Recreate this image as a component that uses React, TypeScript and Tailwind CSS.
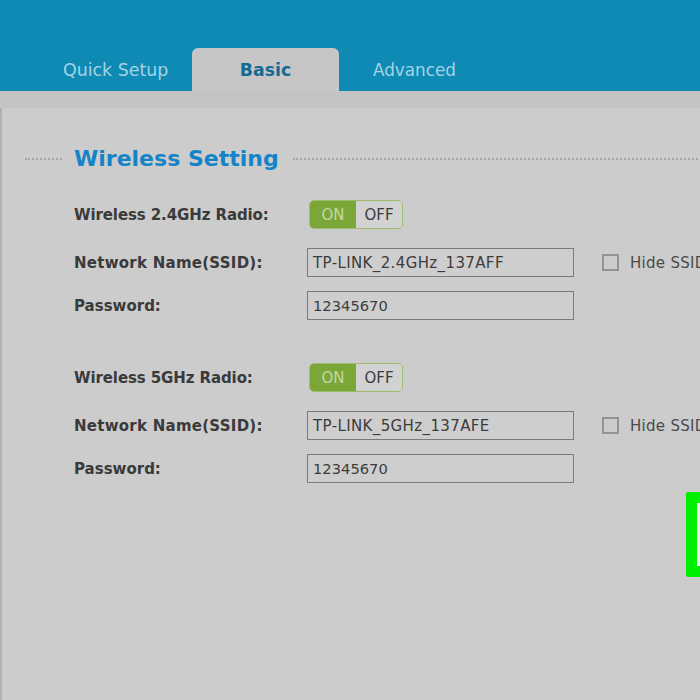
const font = "font-['DejaVu_Sans',_Verdana,_sans-serif]";

function Toggle() {
  return (
    <div className="ml-[2px] flex h-[29px] w-[94px] overflow-hidden rounded-[5px] border border-[#9dbb6e] text-[15px] leading-[29px]">
      <div className="w-[46px] bg-[#7ba638] text-center text-[#c3d8a1]">ON</div>
      <div className="flex-1 bg-[#d2d2d2] text-center text-[#3c3c3c]">OFF</div>
    </div>
  );
}

function Field({ value, wide }: { value: string; wide?: boolean }) {
  return (
    <div
      className={
        wide
          ? "h-[29px] w-[267px] shrink-0 border border-[#7b7b7b] bg-[#cecece] pl-[5px] text-[15px] leading-[29px] tracking-[0.38px] text-[#3c3c3c]"
          : "h-[29px] w-[267px] shrink-0 border border-[#7b7b7b] bg-[#cecece] pl-[5px] text-[14.7px] leading-[27px] text-[#3c3c3c]"
      }
    >
      {value}
    </div>
  );
}

function Label({ children, wide, tight }: { children: string; wide?: boolean; tight?: boolean }) {
  return (
    <div
      className={
        wide
          ? "mt-[2px] w-[233px] shrink-0 text-[15px] font-bold tracking-[0.26px] text-[#3a3a3a]"
          : tight
            ? "mt-[2px] w-[233px] shrink-0 text-[15px] font-bold tracking-[-0.1px] text-[#3a3a3a]"
            : "mt-[2px] w-[233px] shrink-0 text-[15px] font-bold text-[#3a3a3a]"
      }
    >
      {children}
    </div>
  );
}

function Band({ radioLabel, ssid }: { radioLabel: string; ssid: string }) {
  return (
    <div className="flex flex-col">
      <div className="flex h-[29px] items-center">
        <Label tight>{radioLabel}</Label>
        <Toggle />
      </div>
      <div className="mt-[19px] flex h-[29px] items-center">
        <Label wide>Network Name(SSID):</Label>
        <Field value={ssid} wide />
        <div className="ml-[28px] h-[17px] w-[17px] shrink-0 border-2 border-[#949494] bg-[#cccccc]" />
        <div className="ml-[11px] mt-[2px] shrink-0 whitespace-nowrap text-[15px] tracking-[0.3px] text-[#4a4a4a]">Hide SSID</div>
      </div>
      <div className="mt-[14px] flex h-[29px] items-center">
        <Label>Password:</Label>
        <Field value="12345670" />
      </div>
    </div>
  );
}

export default function App() {
  return (
    <div className={`relative flex h-[700px] w-[700px] flex-col overflow-hidden bg-[#cccccc] ${font}`}>
      <div className="flex h-[91px] shrink-0 items-end bg-[#0e8ab5] pl-[63px]">
        <div className="h-[43px] w-[129px] text-[17.4px] leading-[45px] text-[#a5d3e3]">Quick Setup</div>
        <div className="h-[43px] w-[147px] rounded-t-[6px] bg-[#c6c6c6] text-center text-[17.3px] font-bold leading-[45px] text-[#146a94]">
          Basic
        </div>
        <div className="ml-[34px] h-[43px] text-[16.8px] leading-[45px] text-[#a5d3e3]">Advanced</div>
      </div>
      <div className="h-[17px] shrink-0 bg-[#c4c4c4]" />
      <div className="flex-1 border-l-2 border-[#b2b2b2] pl-[23px]">
        <div className="mt-[34px] flex h-[33px] items-center">
          <div className="w-[37px] shrink-0 border-t-2 border-dotted border-[#a6a6a6]" />
          <div className="ml-[12px] shrink-0 whitespace-nowrap text-[22px] font-bold leading-[35px] text-[#1483c8]">Wireless Setting</div>
          <div className="ml-[14px] w-[440px] shrink-0 border-t-2 border-dotted border-[#a6a6a6]" />
        </div>
        <div className="ml-[49px] mt-[25px] flex flex-col gap-[43px]">
          <Band radioLabel="Wireless 2.4GHz Radio:" ssid="TP-LINK_2.4GHz_137AFF" />
          <Band radioLabel="Wireless 5GHz Radio:" ssid="TP-LINK_5GHz_137AFE" />
        </div>
      </div>
      <div className="absolute left-[686px] top-[492px] h-[85px] w-[40px] rounded-[2px] border-[11px] border-[#00ee00] bg-[#e8f8e8]" />
    </div>
  );
}
